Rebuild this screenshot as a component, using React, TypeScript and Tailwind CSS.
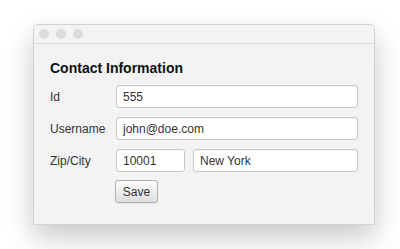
import React from 'react'

const field =
  'h-[23px] rounded-[3px] border border-[#c8c8c8] bg-white px-[6px] text-[12px] text-[#333] shadow-[inset_0_1px_0_rgba(0,0,0,0.04)] outline-none'

const App = () => {
  return (
    <div className="h-[249px] w-[400px] bg-white pl-[33px] pt-[24px] font-['Liberation_Sans',Arial,sans-serif]">
      <div className="flex h-[201px] w-[342px] flex-col rounded-t-[5px] rounded-b-[2px] border border-[#d2d2d2] bg-[#f3f3f3] shadow-[0_12px_28px_rgba(0,0,0,0.22)]">
        <div className="flex h-[19px] items-center gap-[7px] border-b border-[#dcdcdc] pl-[5px]">
          <span className="h-[10px] w-[10px] rounded-full bg-[#dcdcdc]" />
          <span className="h-[10px] w-[10px] rounded-full bg-[#dcdcdc]" />
          <span className="h-[10px] w-[10px] rounded-full bg-[#dcdcdc]" />
        </div>

        <form className="flex flex-col pl-[16px] pr-[16px] pt-[16px]">
          <h2 className="text-[14px] font-bold leading-[17px] text-[#111]">Contact Information</h2>

          <div className="mt-[8px] flex items-center">
            <label htmlFor="id" className="w-[66px] text-[12px] text-[#333]">Id</label>
            <input id="id" type="text" defaultValue="555" className={field + ' w-[242px]'} />
          </div>

          <div className="mt-[9px] flex items-center">
            <label htmlFor="username" className="w-[66px] text-[12px] text-[#333]">Username</label>
            <input id="username" type="text" defaultValue="john@doe.com" className={field + ' w-[242px]'} />
          </div>

          <div className="mt-[9px] flex items-center">
            <label htmlFor="zip" className="w-[66px] text-[12px] text-[#333]">Zip/City</label>
            <input id="zip" type="text" defaultValue="10001" className={field + ' w-[69px]'} />
            <input id="city" type="text" defaultValue="New York" className={field + ' ml-[8px] w-[165px]'} />
          </div>

          <div className="mt-[8px] flex">
            <button
              type="submit"
              className="ml-[65px] h-[23px] w-[43px] rounded-[3px] border border-[#b0b0b0] bg-gradient-to-b from-[#fdfdfd] to-[#dedede] text-[12px] text-[#333] shadow-[0_1px_0_rgba(0,0,0,0.05)]"
            >
              Save
            </button>
          </div>
        </form>
      </div>
    </div>
  )
}

export default App
